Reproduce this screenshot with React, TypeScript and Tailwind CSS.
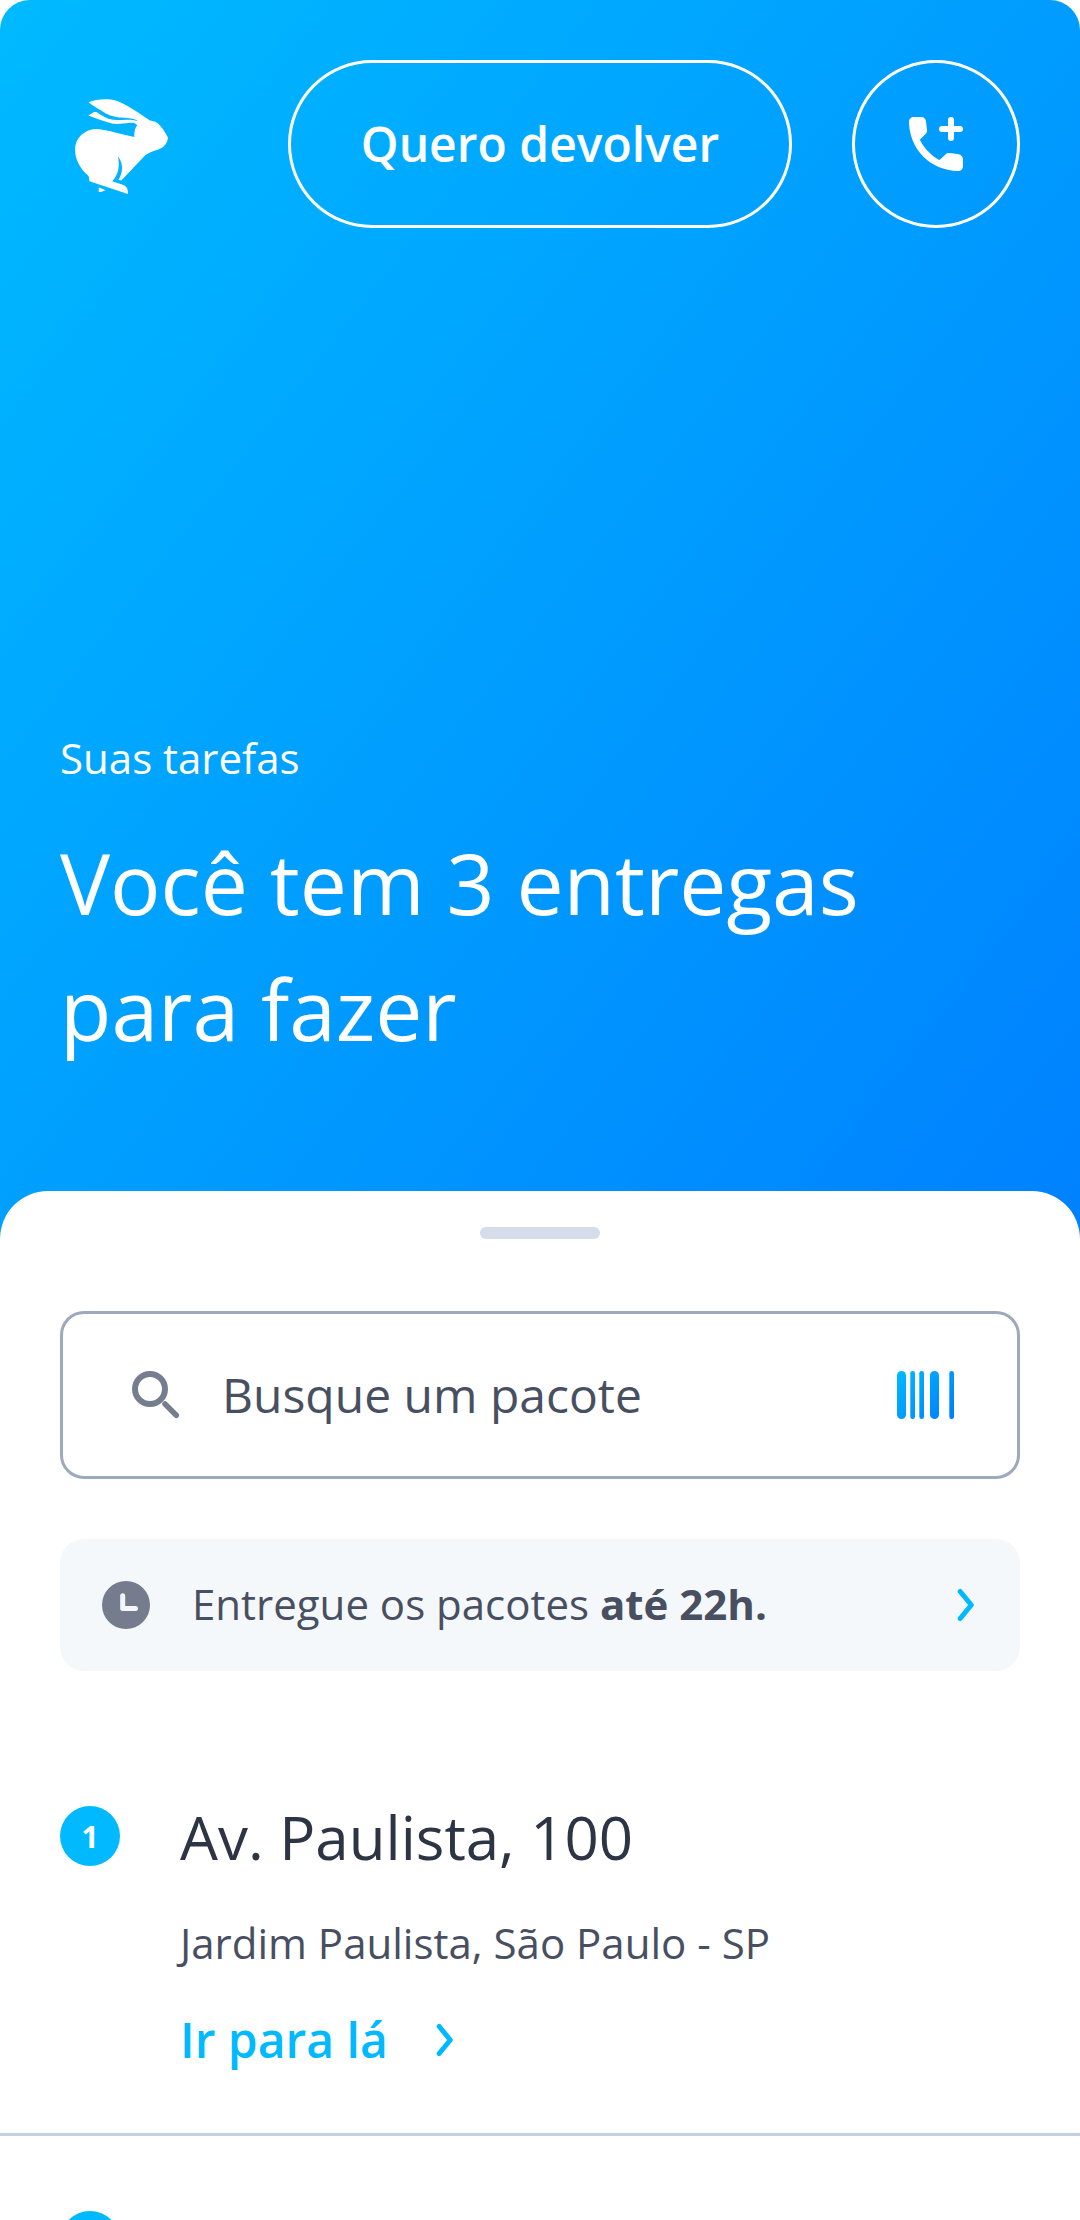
import React from "react";

function Rabbit() {
  return (
    <svg className="h-[96px] w-[96px]" viewBox="75 98 96 96" fill="#fff">
      <path d="M88.500 102.200C94 99.800 103 98.800 111 99.600C121 101 133.500 109.500 149.500 120.200C152 121.200 154.500 121 157 122.800C161 125.500 165 132 168 137.700C167.500 141.500 166 144.500 162.500 147.500C157 150.500 150.500 151.500 145.500 155L121.300 180.500L118.300 180C122 174.500 122.800 168 121.300 163C120.800 160.500 119.300 158.500 118 156.500C119.500 164 119.500 174 112.200 181.200L123.500 185C126.500 186 128.500 189 127.800 194L89.500 181.300C89 179.500 89.200 178 88.500 176C80.500 169 75 160 75 149C75.500 138 84 129.500 96 129C105 129.300 120 134 134.300 137C134 132 135 128 137.200 125.300C135 122.800 133.500 122.800 130 122.800C124 123.500 119 124.300 113 123.800C105 122 96 118.500 88.300 115.600L94 112L96.600 112C101 115.500 107 118.800 113 119.800C120 120.300 130 118.500 138 121C132 117.500 126 118 119 117.500C112 116.500 107 114.500 101 110.500C96.500 107.500 91.500 105 88.500 102.200Z" />
      <path d="M99 189.200C98 187.800 98.500 187.500 101 188.200L105.500 190.200L101 192C98.500 192.400 98 191.600 99 189.200Z" />
    </svg>
  );
}

function PhonePlus() {
  return (
    <svg className="h-[54px] w-[54px]" viewBox="909 117 54 54" fill="#fff">
      <path d="M914 117H921C924 117 925.700 119 926 121.500L927 130C927.100 131.600 926.800 132.700 925.600 133.900L919.800 139.700C924 148 931 155.500 939.500 160L945.500 154.500C946.600 153.500 947.800 153 949.300 153.100L957.500 153.900C960.500 154.200 963 156.500 963 159.500V166C963 169 961 171 958 171C930 170.500 909.500 149 909 122C909 119 911 117 914 117Z" />
      <path d="M951 120V138M942 129H960" stroke="#fff" strokeWidth="6" strokeLinecap="round" />
    </svg>
  );
}

function SearchIcon() {
  return (
    <svg className="h-[48px] w-[48px]" viewBox="0 0 48 48" fill="none" stroke="#757e8f">
      <circle cx="18" cy="18" r="15" strokeWidth="6" />
      <path d="M33 33L44.300 44.300" strokeWidth="5.500" strokeLinecap="round" />
    </svg>
  );
}

function Barcode() {
  return (
    <svg className="h-[48px] w-[57px]" viewBox="0 0 57 48" fill="url(#bars)">
      <defs>
        <linearGradient id="bars" gradientUnits="userSpaceOnUse" x1="2" y1="-2" x2="54" y2="48">
          <stop stopColor="#00baff" />
          <stop offset="1" stopColor="#007dff" />
        </linearGradient>
      </defs>
      <rect width="9" height="48" rx="4.500" />
      <rect x="13.300" width="4.700" height="48" rx="2.300" />
      <rect x="22.300" width="4.700" height="48" rx="2.300" />
      <rect x="33" width="9" height="48" rx="4.500" />
      <rect x="52.300" width="4.700" height="48" rx="2.300" />
    </svg>
  );
}

function Clock() {
  return (
    <svg className="h-[48px] w-[48px]" viewBox="0 0 48 48">
      <circle cx="24" cy="24" r="24" fill="#757c8d" />
      <path
        d="M20.700 14.700V27.500H33.500"
        fill="none"
        stroke="#f3f7fb"
        strokeWidth="5"
        strokeLinecap="round"
        strokeLinejoin="round"
      />
    </svg>
  );
}

function Chevron() {
  return (
    <svg className="h-[34px] w-[18px]" viewBox="0 0 18 34" fill="none">
      <path d="M3.200 3.500L14.300 17L3.200 30.500" stroke="#00b9ff" strokeWidth="5" strokeLinecap="round" strokeLinejoin="round" />
    </svg>
  );
}

function StepBadge({ children }: { children?: React.ReactNode }) {
  return (
    <div className="flex h-[60px] w-[60px] shrink-0 items-center justify-center rounded-full bg-[#00b9ff] pt-[2px] text-[30px] leading-none font-bold text-white">
      {children}
    </div>
  );
}

export default function App() {
  return (
    <div className="h-[2220px] w-[1080px] overflow-hidden bg-white font-['Open_Sans',sans-serif]">
      <header className="flex h-[1260px] flex-col rounded-t-[30px] bg-[linear-gradient(128deg,#00baff_0%,#007dff_106%)] px-[60px] pt-[60px] text-white">
        <div className="flex items-center">
          <div className="mt-[3px] ml-[15px]">
            <Rabbit />
          </div>
          <button className="ml-auto h-[168px] w-[504px] rounded-full border-[3px] border-white text-[48px] font-semibold">
            Quero devolver
          </button>
          <button
            aria-label="Ligar"
            className="ml-[60px] flex h-[168px] w-[168px] items-center justify-center rounded-full border-[3px] border-white"
          >
            <PhonePlus />
          </button>
        </div>
        <p className="mt-[498px] text-[42px] leading-[63px]">Suas tarefas</p>
        <h1 className="mt-[31px] text-[84px] leading-[126px]">
          Você tem 3 entregas
          <br />
          para fazer
        </h1>
      </header>

      <main className="relative -mt-[69px] rounded-t-[48px] bg-white pt-[36px]">
        <div className="mx-auto h-[12px] w-[120px] rounded-full bg-[#d7dceb]" />
        <div className="px-[60px] pt-[72px]">
          <div className="flex h-[168px] items-center rounded-[24px] border-[3px] border-[#9caabb] pr-[63px] pl-[69px] text-[48px] text-[#484f60]">
            <SearchIcon />
            <span className="ml-[42px] flex-1">Busque um pacote</span>
            <Barcode />
          </div>
          <div className="mt-[60px] flex h-[132px] items-center rounded-[24px] bg-[#f4f8fb] pr-[45px] pl-[42px] text-[42px] text-[#484f60]">
            <Clock />
            <span className="ml-[42px] flex-1 pb-[2px] leading-[60px]">
              Entregue os pacotes <b>até 22h.</b>
            </span>
            <Chevron />
          </div>
        </div>

        <section className="mt-[120px] flex h-[345px] border-b-[3px] border-[#c5d1e1] px-[60px]">
          <div className="pt-[15px]">
            <StepBadge>1</StepBadge>
          </div>
          <div className="ml-[60px] pt-[1px]">
            <h2 className="text-[60px] leading-[90px] text-[#2d3545]">Av. Paulista, 100</h2>
            <p className="mt-[29px] text-[42px] leading-[63px] text-[#484f60]">Jardim Paulista, São Paulo - SP</p>
            <a className="mt-[30px] flex items-center text-[48px] leading-[72px] font-semibold text-[#00b9ff]">
              Ir para lá
              <span className="ml-[48px] flex">
                <Chevron />
              </span>
            </a>
          </div>
        </section>
        <section className="px-[60px] pt-[75px]">
          <StepBadge />
        </section>
      </main>
    </div>
  );
}
